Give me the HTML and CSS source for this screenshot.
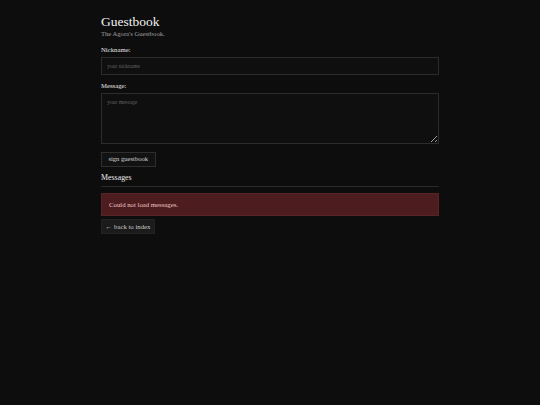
FILE: index.html
```html
<!DOCTYPE html>
<html lang="en">
<head>
<meta charset="utf-8">
<title>Guestbook</title>
<link rel="stylesheet" href="styles.css">
</head>
<body>
<main class="page">
  <h1 class="title">Guestbook</h1>
  <p class="subtitle">The Agora's Guestbook.</p>
  <form class="form">
    <label class="label" for="nick">Nickname:</label>
    <input class="field input" id="nick" type="text" placeholder="your nickname">
    <label class="label label-gap" for="msg">Message:</label>
    <textarea class="field textarea" id="msg" placeholder="your message"></textarea>
    <div class="actions"><button class="btn" type="button">sign guestbook</button></div>
  </form>
  <h3 class="section">Messages</h3>
  <div class="error">Could not load messages.</div>
  <div class="back-row"><a class="back" href="#">← back to index</a></div>
</main>
</body>
</html>
```

FILE: styles.css
```css
html, body {
  margin: 0;
  padding: 0;
  background: #0d0d0d;
}
body {
  font-family: "Liberation Serif", "Times New Roman", serif;
  color: #dcdcdc;
  font-size: 6.75px;
}
.page {
  width: 338px;
  margin: 0 auto;
  padding-top: 13.7px;
  display: flex;
  flex-direction: column;
}
.title {
  margin: 0;
  font-size: 13.5px;
  line-height: 16px;
  font-weight: normal;
  color: #f0f0f0;
}
.subtitle {
  margin: 0;
  font-size: 6.6px;
  line-height: 8px;
  color: #a0a0a0;
}
.form {
  display: flex;
  flex-direction: column;
  margin-top: 8px;
}
.label {
  font-size: 6.75px;
  line-height: 8px;
  color: #e8e8e8;
  margin-bottom: 3.6px;
}
.label-gap {
  margin-top: 6.4px;
}
.field {
  box-sizing: border-box;
  width: 100%;
  margin: 0;
  background: #0f0f0f;
  border: 1px solid #2c2c2c;
  border-radius: 0;
  color: #ddd;
  font-family: "Liberation Serif", "Times New Roman", serif;
  font-size: 5.5px;
  padding: 0 5.2px;
  outline: none;
}
.field::placeholder {
  color: #626262;
}
.input {
  height: 18px;
}
.textarea {
  height: 50.4px;
  padding-top: 4.5px;
  resize: vertical;
  display: block;
}
.actions {
  display: flex;
  margin-top: 8.6px;
}
.btn {
  box-sizing: border-box;
  height: 14.4px;
  padding: 0 6.4px;
  background: #121212;
  border: 1px solid #2e2e2e;
  border-radius: 0;
  color: #d4d4d4;
  font-family: "Liberation Serif", "Times New Roman", serif;
  font-size: 6.6px;
  line-height: 1;
}
.section {
  margin: 6.4px 0 0;
  font-size: 7.9px;
  line-height: 9px;
  font-weight: normal;
  color: #eaeaea;
  padding-bottom: 3.9px;
  border-bottom: 1px solid #2a2a2a;
}
.error {
  margin-top: 6.3px;
  box-sizing: border-box;
  height: 22.4px;
  padding: 0 7px;
  display: flex;
  align-items: center;
  background: #4c1c1e;
  border: 1px solid #5a2426;
  color: #ecc8c8;
  font-size: 6.75px;
}
.back-row {
  display: flex;
  margin-top: 3.6px;
}
.back {
  box-sizing: border-box;
  height: 14.7px;
  display: flex;
  align-items: center;
  padding: 0 3.6px;
  background: #1b1b1b;
  border: 1px solid #222;
  color: #cccccc;
  text-decoration: none;
  font-size: 6.75px;
}
```
